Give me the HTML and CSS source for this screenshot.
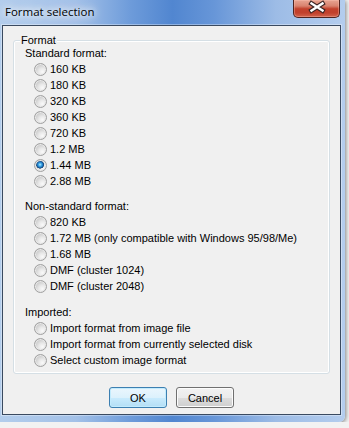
FILE: index.html
```html
<!DOCTYPE html>
<html lang="en">
    <head>
        <meta charset="UTF-8" />
        <title>Format selection</title>
        <link rel="stylesheet" href="styles.css">
    </head>
    <body>

        <div class="window">
            <div class="titlebar">
                <span class="title">Format selection</span>
                <button class="close-btn" type="button" aria-label="Close">
                    <svg width="47" height="18" viewBox="0 0 47 18">
                        <path d="M19.5 3.5 L30.5 10.5 M30.5 3.5 L19.5 10.5" stroke="#3b2424" stroke-width="4.6" stroke-linecap="square" fill="none" />
                        <path d="M19.5 3.5 L30.5 10.5 M30.5 3.5 L19.5 10.5" stroke="#ffffff" stroke-width="2.4" stroke-linecap="square" fill="none" />
                    </svg>
                </button>
            </div>

            <div class="client">
                <div class="group">
                    <span class="group-title">Format</span>

                    <div class="section">
                        <div class="section-label">Standard format:</div>
                        <label class="option"><input type="radio" name="fmt" />160 KB</label>
                        <label class="option"><input type="radio" name="fmt" />180 KB</label>
                        <label class="option"><input type="radio" name="fmt" />320 KB</label>
                        <label class="option"><input type="radio" name="fmt" />360 KB</label>
                        <label class="option"><input type="radio" name="fmt" />720 KB</label>
                        <label class="option"><input type="radio" name="fmt" />1.2 MB</label>
                        <label class="option"><input type="radio" name="fmt" checked />1.44 MB</label>
                        <label class="option"><input type="radio" name="fmt" />2.88 MB</label>
                    </div>

                    <div class="section">
                        <div class="section-label">Non-standard format:</div>
                        <label class="option"><input type="radio" name="fmt" />820 KB</label>
                        <label class="option"><input type="radio" name="fmt" />1.72 MB (only compatible with Windows 95/98/Me)</label>
                        <label class="option"><input type="radio" name="fmt" />1.68 MB</label>
                        <label class="option"><input type="radio" name="fmt" />DMF (cluster 1024)</label>
                        <label class="option"><input type="radio" name="fmt" />DMF (cluster 2048)</label>
                    </div>

                    <div class="section section-last">
                        <div class="section-label">Imported:</div>
                        <label class="option"><input type="radio" name="fmt" />Import format from image file</label>
                        <label class="option"><input type="radio" name="fmt" />Import format from currently selected disk</label>
                        <label class="option"><input type="radio" name="fmt" />Select custom image format</label>
                    </div>
                </div>

                <div class="buttons">
                    <button class="btn btn-default" type="button">OK</button>
                    <button class="btn" type="button">Cancel</button>
                </div>
            </div>
        </div>

    </body>
</html>
```

FILE: styles.css
```css
body {
    margin: 0;
    background-color: #f2f2f2;
    font-family: 'Liberation Sans', Arial, sans-serif;
    font-size: 11px;
    color: #000000;
}

.window {
    width: 345px;
    height: 422px;
    box-sizing: border-box;
    border-radius: 0 0 6px 0;
    background: linear-gradient(to right, #b3cdec 0%, #a3c1e8 22%, #6d9bda 38%, #5186d0 50%, #6796d8 62%, #9dbce6 80%, #b4cdee 100%);
    box-shadow: 1px 1px 4px rgba(0, 0, 0, 0.45);
    display: flex;
    flex-direction: column;
}

.titlebar {
    height: 25px;
    display: flex;
    align-items: flex-start;
}

.title {
    margin-top: 4px;
    padding-left: 5px;
    font-family: 'Open Sans', 'Noto Sans', sans-serif;
    font-size: 11.5px;
    line-height: 15px;
    color: #000000;
    text-shadow: 0 0 6px #ffffff, 0 0 10px #ffffff, 0 0 16px rgba(255, 255, 255, 0.9);
}

.close-btn {
    margin-left: auto;
    margin-right: 5px;
    width: 47px;
    height: 18px;
    padding: 0;
    border: 1px solid #4e2320;
    border-top: none;
    border-radius: 0 0 5px 5px;
    background: linear-gradient(#e8a492 0%, #d9836f 35%, #c2412c 52%, #c1402c 75%, #d0634c 100%);
    box-shadow: inset 0 0 0 1px rgba(255, 200, 185, 0.35);
    display: flex;
    align-items: center;
    justify-content: center;
    cursor: pointer;
}

.close-btn svg {
    display: block;
    margin-left: -2px;
}

.client {
    margin-left: 2px;
    width: 339px;
    height: 390px;
    box-sizing: border-box;
    border: 1px solid #3a4a60;
    background-color: #f0f0f0;
    box-shadow: 0 0 0 1px rgba(255, 255, 255, 0.35);
}

.group {
    position: relative;
    margin: 14px 10px 0;
    padding: 4px 0 5px 11px;
    border: 1px solid #d5dfe5;
    border-radius: 3px;
    box-shadow: inset 0 0 0 1px #ffffff;
}

.group-title {
    position: absolute;
    top: -7px;
    left: 6px;
    padding: 0 1px;
    line-height: 13px;
    background-color: #f0f0f0;
}

.section {
    margin-bottom: 9px;
}

.section + .section-last {
    margin-top: 10px;
}

.section-last {
    margin-bottom: 0;
}

.section-label {
    height: 16px;
    line-height: 16px;
}

.option {
    height: 16px;
    padding-left: 9px;
    display: flex;
    align-items: center;
    white-space: nowrap;
}

.option input {
    appearance: none;
    -webkit-appearance: none;
    width: 13px;
    height: 13px;
    margin: 0 3px 0 0;
    border: 1px solid #a0a0a0;
    border-radius: 50%;
    box-sizing: border-box;
    background: radial-gradient(circle at 68% 72%, #fafafa 0, #e8e8e8 35%, #cbcbcb 70%, #c4c4c4 100%);
    box-shadow: inset 0 0 0 1px #e9e9e9;
}

.option input:checked {
    background:
        radial-gradient(circle at 46% 42%, #c4f0ff 0, #4fb6ee 1.3px, #1f79c4 2.6px, #174f86 3.4px, #34597c 3.8px, rgba(0, 0, 0, 0) 4.2px),
        radial-gradient(circle at 68% 72%, #fafafa 0, #e8e8e8 35%, #cbcbcb 70%, #c4c4c4 100%);
}

.buttons {
    margin-top: 13px;
    display: flex;
    justify-content: center;
    gap: 9px;
}

.btn {
    width: 58px;
    height: 21px;
    padding: 0;
    font-family: 'Liberation Sans', Arial, sans-serif;
    font-size: 11px;
    color: #000000;
    border: 1px solid #707070;
    border-radius: 3px;
    background: linear-gradient(#f2f2f2 0%, #ebebeb 50%, #dddddd 51%, #cfcfcf 100%);
    box-shadow: inset 0 0 0 1px #fcfcfc;
    cursor: pointer;
}

.btn-default {
    border-color: #3c7fb1;
    background: linear-gradient(#eaf6fd 0%, #dcf1fc 50%, #c9ebfd 51%, #b3def5 100%);
    box-shadow: inset 0 0 0 1px #c2ebfd;
}
```
